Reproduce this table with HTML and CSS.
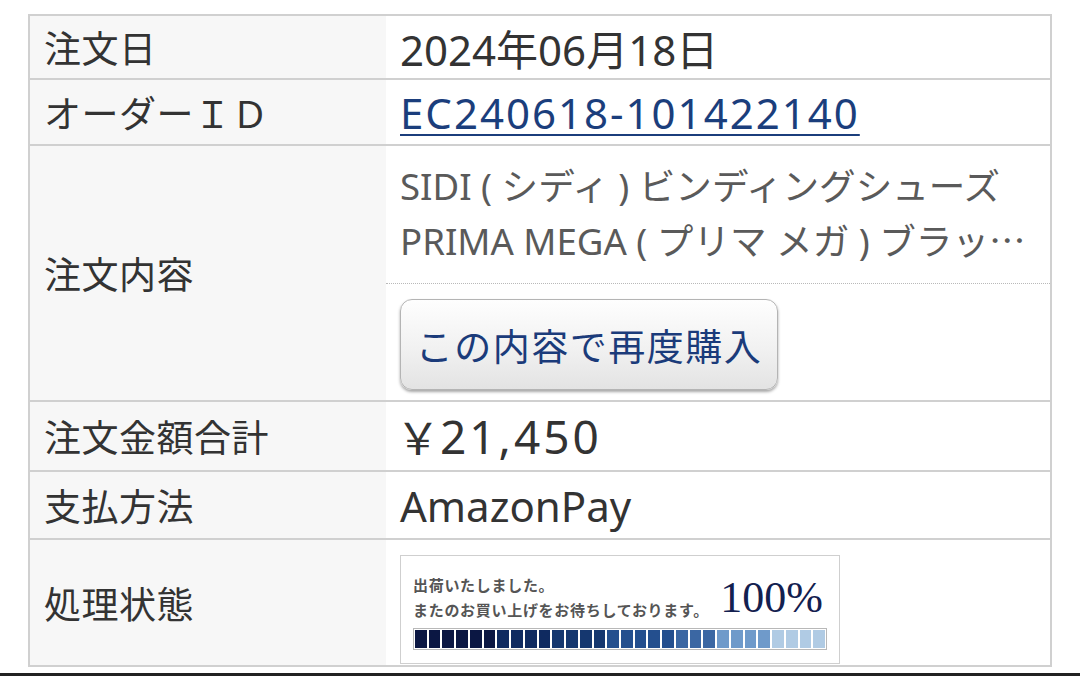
FILE: index.html
```html
<!DOCTYPE html>
<html lang="ja">
<head>
<meta charset="utf-8">
<title>注文詳細</title>
<link rel="stylesheet" href="styles.css">
</head>
<body>
<div class="order">
  <div class="row r-date">
    <div class="label">注文日</div>
    <div class="value">2024年06月18日</div>
  </div>
  <div class="row r-id">
    <div class="label">オーダーＩＤ</div>
    <div class="value"><a class="link" href="#">EC240618-101422140</a></div>
  </div>
  <div class="row r-items">
    <div class="label">注文内容</div>
    <div class="value items">
      <div class="product">
        <div class="product-line">SIDI ( シディ ) ビンディングシューズ</div>
        <div class="product-line">PRIMA MEGA ( プリマ メガ ) ブラッ<span class="ellipsis">…</span></div>
      </div>
      <div class="rebuy-wrap"><button class="rebuy" type="button">この内容で再度購入</button></div>
    </div>
  </div>
  <div class="row r-total">
    <div class="label">注文金額合計</div>
    <div class="value price"><span class="yen">￥</span>21,450</div>
  </div>
  <div class="row r-pay">
    <div class="label">支払方法</div>
    <div class="value">AmazonPay</div>
  </div>
  <div class="row r-status">
    <div class="label">処理状態</div>
    <div class="value status-cell">
      <div class="status">
        <div class="status-top">
          <div class="status-msg">出荷いたしました。<br>またのお買い上げをお待ちしております。</div>
          <div class="status-pct">100%</div>
        </div>
        <div class="bar">
          <span class="seg"></span><span class="seg"></span><span class="seg"></span><span class="seg"></span><span class="seg"></span>
          <span class="seg"></span><span class="seg"></span><span class="seg"></span><span class="seg"></span><span class="seg"></span>
          <span class="seg"></span><span class="seg"></span><span class="seg"></span><span class="seg"></span><span class="seg"></span>
          <span class="seg"></span><span class="seg"></span><span class="seg"></span><span class="seg"></span><span class="seg"></span>
          <span class="seg"></span><span class="seg"></span><span class="seg"></span><span class="seg"></span><span class="seg"></span>
          <span class="seg"></span><span class="seg"></span><span class="seg"></span><span class="seg"></span><span class="seg"></span>
        </div>
      </div>
    </div>
  </div>
</div>
<div class="bottom-bar"></div>
</body>
</html>
```

FILE: styles.css
```css
html, body {
  margin: 0;
  padding: 0;
  background: #ffffff;
}
body {
  width: 1080px;
  height: 676px;
  overflow: hidden;
  font-family: "Noto Sans CJK JP", "Noto Sans", sans-serif;
  color: #333333;
}
.order {
  margin: 14px 0 0 28px;
  width: 1024px;
  box-sizing: border-box;
  border: 2px solid #d0d0d0;
}
.row {
  display: grid;
  grid-template-columns: 356px 1fr;
  border-top: 2px solid #d0d0d0;
}
.row:first-child {
  border-top: none;
}
.r-date { height: 62px; }
.r-id { height: 64px; }
.r-items { height: 254px; }
.r-total { height: 68px; }
.r-pay { height: 66px; }
.r-status { height: 125px; }

.label {
  background: #f7f7f7;
  display: flex;
  align-items: center;
  padding-left: 14px;
  font-size: 37px;
  color: #333333;
  letter-spacing: 0.5px;
}
.value {
  background: #ffffff;
  display: flex;
  align-items: center;
  padding-left: 14px;
  font-family: "Noto Sans", "Noto Sans CJK JP", sans-serif;
  font-size: 42px;
  color: #333333;
}
.link {
  color: #1b3e7c;
  text-decoration: underline;
  text-decoration-thickness: 2px;
  text-underline-offset: 5px;
  letter-spacing: 2px;
}
.price {
  font-size: 46px;
  letter-spacing: 3px;
}
.yen {
  font-family: "Noto Sans CJK JP", sans-serif;
  font-size: 44px;
  margin-left: -4px;
  margin-right: -3px;
}
.items {
  flex-direction: column;
  align-items: stretch;
  padding-left: 0;
}
.product {
  padding: 14px 0 15px 14px;
  border-bottom: 1px dotted #b9b9b9;
}
.product-line {
  font-size: 36.6px;
  line-height: 53px;
  color: #5a5a5a;
  white-space: nowrap;
}
.ellipsis {
  font-family: "Noto Sans CJK JP", sans-serif;
  letter-spacing: -4px;
}
.rebuy-wrap {
  padding: 15px 0 0 14px;
}
.rebuy {
  width: 378px;
  height: 91px;
  border: 1px solid #b4b4b4;
  border-radius: 12px;
  background: linear-gradient(#fefefe, #f1f1f1 55%, #e3e3e3);
  box-shadow: 0 2px 3px rgba(0, 0, 0, 0.35);
  font-family: "Noto Sans CJK JP", sans-serif;
  font-size: 37px;
  color: #1b3b7a;
  padding: 0;
  letter-spacing: 1.5px;
}
.status-cell {
  align-items: flex-start;
  padding-top: 15px;
}
.status {
  width: 440px;
  height: 109px;
  box-sizing: border-box;
  border: 1px solid #cfcfcf;
  padding: 16px 10px 8px 12px;
  display: flex;
  flex-direction: column;
}
.status-top {
  display: flex;
  align-items: flex-end;
  justify-content: space-between;
}
.status-msg {
  font-family: "Noto Sans CJK JP", sans-serif;
  font-size: 15px;
  font-weight: bold;
  line-height: 25px;
  color: #555555;
  letter-spacing: 0.7px;
}
.status-pct {
  font-family: "Liberation Serif", serif;
  font-size: 44px;
  line-height: 44px;
  color: #13204f;
  margin-right: 6px;
  margin-bottom: 2px;
}
.bar {
  margin-top: 6px;
  width: 414px;
  height: 22px;
  box-sizing: border-box;
  border: 1px solid #b8b8b8;
  padding: 1px;
  display: flex;
  gap: 2px;
}
.seg {
  flex: 1;
  background: #0b1743;
}
.seg:nth-child(n+7) { background: #0f2a60; }
.seg:nth-child(n+11) { background: #15376f; }
.seg:nth-child(n+15) { background: #244f8e; }
.seg:nth-child(n+20) { background: #3b67a3; }
.seg:nth-child(n+23) { background: #6f9aca; }
.seg:nth-child(n+27) { background: #b0cbe4; }
.bottom-bar {
  margin-top: 6px;
  height: 3px;
  background: #222222;
}
```
